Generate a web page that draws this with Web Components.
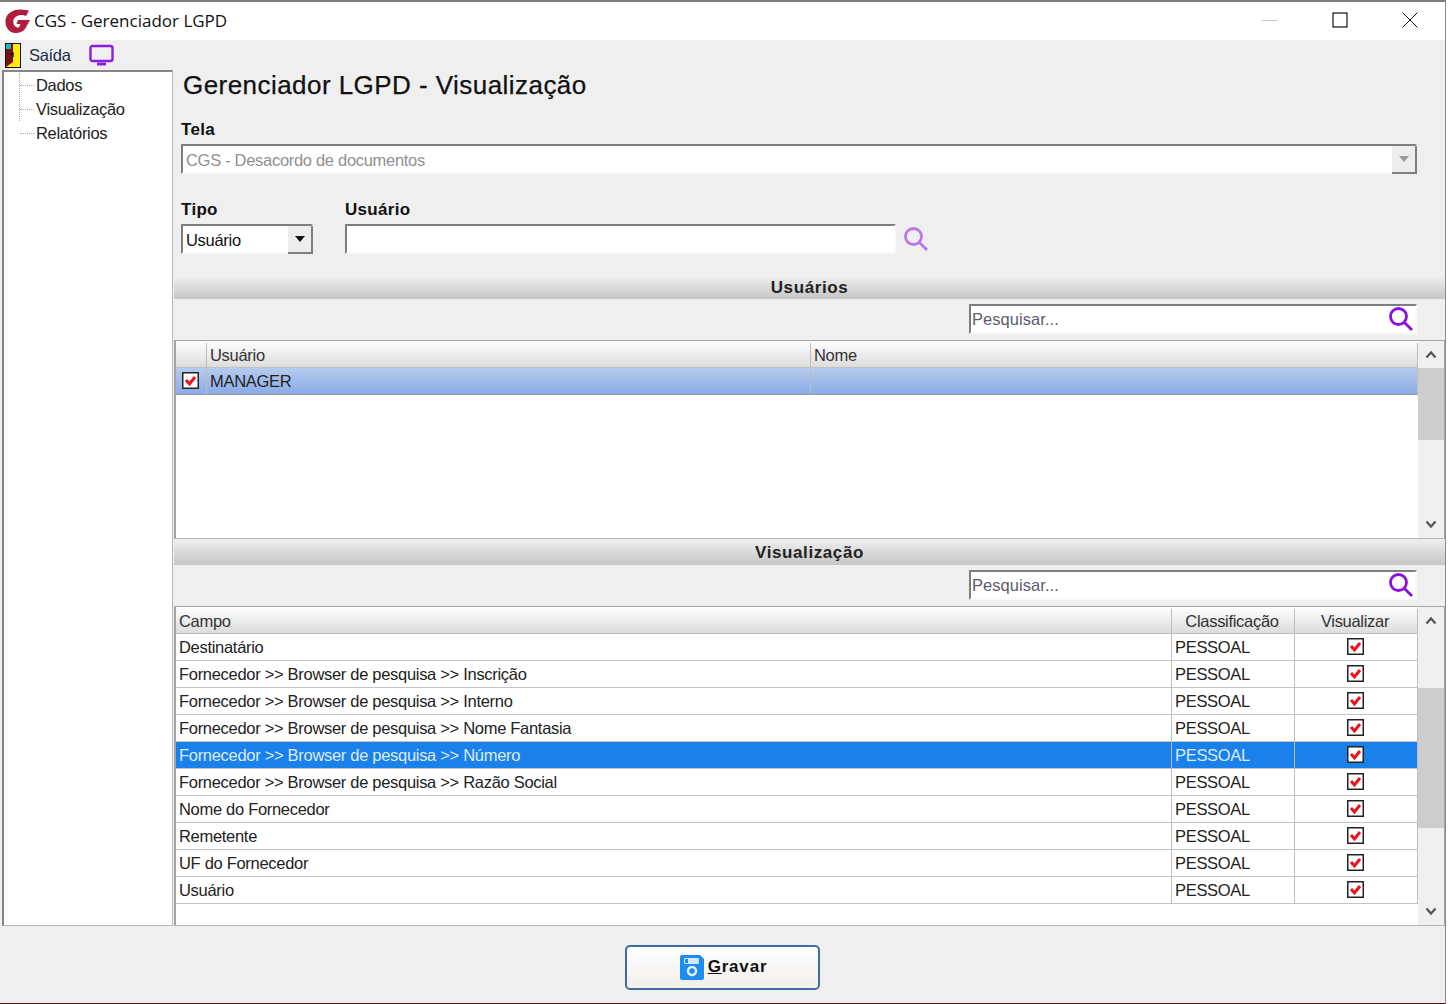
<!DOCTYPE html>
<html lang="pt">
<head>
<meta charset="UTF-8">
<title>CGS - Gerenciador LGPD</title>
<style>
    html, body { margin: 0; padding: 0; background: #fff; }
    body { font-family: "Liberation Sans", Arial, sans-serif; font-size: 16.5px; letter-spacing: -.3px; color: #111; }
</style>
</head>
<body>
<template id="search-icon">
    <svg width="26" height="26" viewBox="0 0 26 26" fill="none" stroke="currentColor" stroke-width="2.8"><circle cx="10.5" cy="10.5" r="8"/><path d="M16.2 16.2 L24 24"/></svg>
</template>

<app-window>
    <title-bar slot="title">CGS - Gerenciador LGPD</title-bar>
    <tool-bar slot="tools">Saída</tool-bar>
    <nav-tree slot="nav">
        <tree-item>Dados</tree-item>
        <tree-item>Visualização</tree-item>
        <tree-item>Relatórios</tree-item>
    </nav-tree>
    <lgpd-form slot="content"></lgpd-form>
    <save-bar slot="footer">Gravar</save-bar>
</app-window>

<script>
    // small helper, every element is the same shadow + style setup
    function define(name, css, html, extra) {
        class El extends HTMLElement {
            constructor() {
                super();
                const root = this.attachShadow({ mode: 'open' });
                root.innerHTML = `<style>${css}</style>${html}`;
                if (extra) extra(this, root);
            }
        }
        customElements.define(name, El);
    }

    const searchSvg = document.getElementById('search-icon').innerHTML;

    define('app-window', `
        :host { display: flex; flex-direction: column; width: 1446px; height: 1004px; box-sizing: border-box;
                background: #efefef; border-top: 2px solid #7c7c7c; border-right: 1px solid #8a8a8a; border-bottom: 1px solid #5e1015; }
        .main { display: flex; height: 856px; padding-left: 2px; }
    `, `
        <slot name="title"></slot>
        <slot name="tools"></slot>
        <div class="main"><slot name="nav"></slot><slot name="content"></slot></div>
        <slot name="footer"></slot>
    `);

    define('title-bar', `
        :host { display: flex; align-items: center; height: 38px; background: #fff; flex: none;
                font-family: "Open Sans", sans-serif; font-size: 17px; letter-spacing: 0; color: #111; }
        .logo { margin: 0 4px 0 5px; flex: none; }
        .label { flex: 1; margin-top: -1px; }
        .btns { display: flex; }
        .btn { width: 70px; height: 38px; display: flex; align-items: center; justify-content: center; margin-top: -2px; }
    `, `
        <svg class="logo" width="25" height="25" viewBox="0 0 25 25">
            <path d="M24 1.5 L21 7 C17 5 10 6 8.5 11 C7.5 15 10 19 14 18.5 L15.5 15 L11.5 15 L13 11 L25 11 L20 20 C17 24 10 25 6 23 C1 20 -.5 14 1 9 C3 3 10 0 16 .5 C19 .7 22 1 24 1.5 Z" fill="#b01c3f"/>
        </svg>
        <span class="label"><slot></slot></span>
        <div class="btns">
            <div class="btn"><svg width="16" height="16"><path d="M0 8.5 H16" stroke="#c8c8c8"/></svg></div>
            <div class="btn"><svg width="16" height="16" fill="none"><rect x="1" y="1" width="14" height="14" stroke="#111" stroke-width="1.2"/></svg></div>
            <div class="btn"><svg width="16" height="16" fill="none"><path d="M.5 .5 L15.5 15.5 M15.5 .5 L.5 15.5" stroke="#111"/></svg></div>
        </div>
    `);

    define('tool-bar', `
        :host { display: flex; align-items: center; height: 30px; padding-left: 5px; flex: none; color: #1c2a4a; }
        .txt { margin: 0 18px 0 8px; }
    `, `
        <svg width="16" height="25" viewBox="0 0 16 25">
            <rect x=".5" y=".5" width="15" height="24" fill="#ffee00" stroke="#111"/>
            <path d="M1 1 H8 V19 L1 24 Z" fill="#7a1410"/>
            <rect x="1" y="1" width="5" height="5" fill="#18b8c8"/>
            <path d="M8 9 V14 M5 11 H8" stroke="#111" stroke-width="1.4"/>
        </svg>
        <span class="txt"><slot></slot></span>
        <svg width="26" height="22" viewBox="0 0 26 22" fill="none">
            <rect x="1.5" y="2" width="22" height="15" rx="2" stroke="#8a1fe0" stroke-width="2.4"/>
            <path d="M8 20 H17" stroke="#8a1fe0" stroke-width="3"/>
        </svg>
    `);

    define('nav-tree', `
        :host { display: block; width: 171px; height: 856px; flex: none; box-sizing: border-box; background: #fff;
                border: 2px solid #868686; border-right-color: #b8b8b8; border-bottom-color: #b8b8b8; border-right-width: 1px; border-bottom-width: 1px; padding-top: 1px; }
        .list { margin-left: 15px; border-left: 1px dotted #aaa; height: 48px; margin-top: 11px; position: relative; }
        .items { margin-top: -11px; }
    `, `<div class="list"><div class="items"><slot></slot></div></div>`);

    define('tree-item', `
        :host { display: flex; align-items: center; height: 24px; color: #222; }
        i { width: 14px; border-top: 1px dotted #aaa; margin-right: 2px; }
    `, `<i></i><span><slot></slot></span>`);

    define('field-label', `
        :host { display: block; font-weight: bold; font-size: 17px; line-height: 20px; color: #111; letter-spacing: .3px; margin-bottom: 4px; }
    `, `<slot></slot>`);

    define('combo-box', `
        :host { display: flex; box-sizing: border-box; height: 30px; background: #fff; align-items: center;
                border: 2px solid #7e7e7e; border-right-color: #f9f9f9; border-bottom-color: #f9f9f9; padding-left: 3px; color: #111; }
        :host([disabled]) { color: #909090; }
        .txt { flex: 1; padding-top: 2px; }
        .arrow { width: 25px; height: 28px; box-sizing: border-box; background: #ededed; display: flex; align-items: center; justify-content: center;
                 border-right: 2px solid #7e7e7e; border-bottom: 2px solid #7e7e7e; margin-right: -2px; margin-bottom: -1px; }
        .arrow b { border: 5px solid transparent; border-top: 6px solid #111; border-bottom: 0; }
        :host([disabled]) .arrow b { border-top-color: #9a9a9a; }
    `, `<span class="txt"><slot></slot></span><span class="arrow"><b></b></span>`);

    define('text-box', `
        :host { display: block; box-sizing: border-box; height: 30px; background: #fff;
                border: 2px solid #7e7e7e; border-right-color: #f9f9f9; border-bottom-color: #f9f9f9; }
    `, ``);

    define('section-bar', `
        :host { display: block; box-sizing: border-box; text-align: center; font-weight: bold; font-size: 17px; letter-spacing: .6px; line-height: 24px; height: 23px; color: #222;
                background: linear-gradient(#efefef, #c6c6c6); }
        :host([tall]) { height: 26px; padding-top: 2px; }
    `, `<slot></slot>`);

    define('search-box', `
        :host { display: flex; width: 448px; height: 30px; box-sizing: border-box; align-items: center; background: #fff; color: #5c5c6c; letter-spacing: .05px;
                border: 2px solid #7e7e7e; border-right-color: #f9f9f9; border-bottom-color: #f9f9f9; }
        span { flex: 1; padding-left: 1px; }
        svg { color: #8a10e0; margin: 0 1px 0 0; display: block; }
    `, `<span><slot></slot></span>${searchSvg}`);

    define('check-mark', `
        :host { display: inline-flex; width: 17px; height: 17px; margin-top: -2px; }
    `, `<svg width="17" height="17" viewBox="0 0 17 17"><rect x=".75" y=".75" width="15.5" height="15.5" fill="#fff" stroke="#222" stroke-width="1.5"/><path d="M4 8 L7.5 12 L13 5" fill="none" stroke="#f0101c" stroke-width="3"/></svg>`);

    define('scroll-bar', `
        :host { display: flex; flex-direction: column; width: 26px; flex: none; background: #f0f0f0; }
        .end { height: 27px; flex: none; display: flex; align-items: center; justify-content: center; }
        .track { flex: 1; }
        .thumb { background: #cdcdcd; }
    `, `
        <div class="end"><svg width="12" height="9"><path d="M1.5 7.5 L6 2.5 L10.5 7.5" fill="none" stroke="#555" stroke-width="2.2"/></svg></div>
        <div class="track"><div class="thumb"></div></div>
        <div class="end"><svg width="12" height="9"><path d="M1.5 1.5 L6 6.5 L10.5 1.5" fill="none" stroke="#555" stroke-width="2.2"/></svg></div>
    `);

    define('data-grid', `
        :host { display: flex; box-sizing: border-box; background: #fff; border: 1px solid #a4a4a4; border-left-width: 2px; border-bottom-color: #b4b4b4; }
        .body { flex: 1; min-width: 0; }
    `, `<div class="body"><slot></slot></div><scroll-bar></scroll-bar>`, (el, root) => {
        const thumb = root.querySelector('scroll-bar').shadowRoot.querySelector('.thumb');
        thumb.style.marginTop = el.getAttribute('thumb-top') + 'px';
        thumb.style.height = el.getAttribute('thumb-size') + 'px';
    });

    define('grid-row', `
        :host { display: grid; grid-template-columns: var(--cols); height: 27px; box-sizing: border-box; color: #222;
                border-bottom: 1px solid #c4c4c4; }
        :host([head]) { background: linear-gradient(#fff, #dcdcdc); border-bottom: 1px solid #c0c0c0; color: #333; padding-top: 2px; }
        :host([soft]) { background: linear-gradient(#b6cbef, #8aabe5); border-bottom: 1px solid #9a9a9a; }
        :host([picked]) { background: #1a80ea; color: #dcebff; }
    `, `<slot></slot>`);

    define('grid-cell', `
        :host { display: flex; align-items: center; padding-left: 3px; border-right: 1px solid #bdbdbd; white-space: nowrap; overflow: hidden; min-width: 0; }
        :host([center]) { justify-content: center; padding: 0 2px 0 0; }
    `, `<slot></slot>`);

    const campos = ['Destinatário',
        'Fornecedor >> Browser de pesquisa >> Inscrição',
        'Fornecedor >> Browser de pesquisa >> Interno',
        'Fornecedor >> Browser de pesquisa >> Nome Fantasia',
        'Fornecedor >> Browser de pesquisa >> Número',
        'Fornecedor >> Browser de pesquisa >> Razão Social',
        'Nome do Fornecedor', 'Remetente', 'UF do Fornecedor', 'Usuário'];

    const linhas = campos.map((c, i) => `
        <grid-row ${i === 4 ? 'picked' : ''}>
            <grid-cell>${c.replace(/>/g, '&gt;')}</grid-cell>
            <grid-cell>PESSOAL</grid-cell>
            <grid-cell center><check-mark></check-mark></grid-cell>
        </grid-row>`).join('');

    define('lgpd-form', `
        :host { display: flex; flex-direction: column; width: 1271px; flex: none; margin-left: 1px; }
        h1 { margin: 0; font-weight: normal; font-size: 26px; line-height: 30px; letter-spacing: .45px; color: #111; padding: 0 0 0 2px; height: 30px; -webkit-text-stroke: .25px #111; }
        .top { padding: 0 28px 0 7px; display: flex; flex-direction: column; }
        .head { height: 50px; }
        .row { display: flex; gap: 32px; margin-top: 26px; }
        .row > div { display: flex; flex-direction: column; }
        .type { width: 132px; }
        .user { width: 551px; }
        .user-in { display: flex; align-items: center; width: 584px; }
        .user-in svg { color: #bb77ea; margin-left: 7px; flex: none; }
        .find { display: flex; justify-content: flex-end; padding: 5px 28px 6px 0; height: 30px; }
        .g1 { --cols: 31px 604px 1fr; height: 199px; }
        .g2 { --cols: 996px 123px 1fr; height: 320px; }
        .user-in text-box { flex: none; width: 551px; }
    `, `
        <div class="top">
            <div class="head"><h1>Gerenciador LGPD - Visualização</h1></div>
            <div><field-label>Tela</field-label><combo-box disabled>CGS - Desacordo de documentos</combo-box></div>
            <div class="row">
                <div class="type"><field-label>Tipo</field-label><combo-box>Usuário</combo-box></div>
                <div class="user"><field-label>Usuário</field-label><div class="user-in"><text-box></text-box>${searchSvg}</div></div>
            </div>
        </div>
        <section-bar style="margin-top:22px">Usuários</section-bar>
        <div class="find"><search-box>Pesquisar...</search-box></div>
        <data-grid class="g1" thumb-top="0" thumb-size="72">
            <grid-row head><grid-cell></grid-cell><grid-cell>Usuário</grid-cell><grid-cell>Nome</grid-cell></grid-row>
            <grid-row soft><grid-cell center><check-mark></check-mark></grid-cell><grid-cell>MANAGER</grid-cell><grid-cell></grid-cell></grid-row>
        </data-grid>
        <section-bar tall>Visualização</section-bar>
        <div class="find"><search-box>Pesquisar...</search-box></div>
        <data-grid class="g2" thumb-top="54" thumb-size="140">
            <grid-row head><grid-cell>Campo</grid-cell><grid-cell center>Classificação</grid-cell><grid-cell center>Visualizar</grid-cell></grid-row>
            ${linhas}
        </data-grid>
    `);

    define('save-bar', `
        :host { display: flex; flex: 1; align-items: center; justify-content: center; }
        button { display: flex; align-items: center; justify-content: center; gap: 4px; width: 195px; height: 45px; margin-top: 5px; box-sizing: border-box;
                 border: 2px solid #3f6d9f; border-radius: 5px; background: linear-gradient(#fff, #f3efeb); font: bold 17px "Liberation Sans", sans-serif; color: #111; letter-spacing: .8px; padding: 0 0 0 2px; }
    `, `
        <button>
            <svg width="24" height="25" viewBox="0 0 24 25">
                <path d="M2 0 H20 L24 4 V23 Q24 25 22 25 H2 Q0 25 0 23 V2 Q0 0 2 0 Z" fill="#1c8cf0"/>
                <rect x="4" y="3" width="15" height="6" rx="1" fill="#cfe6fb"/>
                <rect x="5" y="4" width="3" height="4" fill="#1c8cf0"/>
                <circle cx="12" cy="16" r="4" fill="none" stroke="#e4f1fc" stroke-width="2.4"/>
            </svg>
            <span><u>G</u>ravar</span>
        </button>
    `);
</script>
</body>
</html>
